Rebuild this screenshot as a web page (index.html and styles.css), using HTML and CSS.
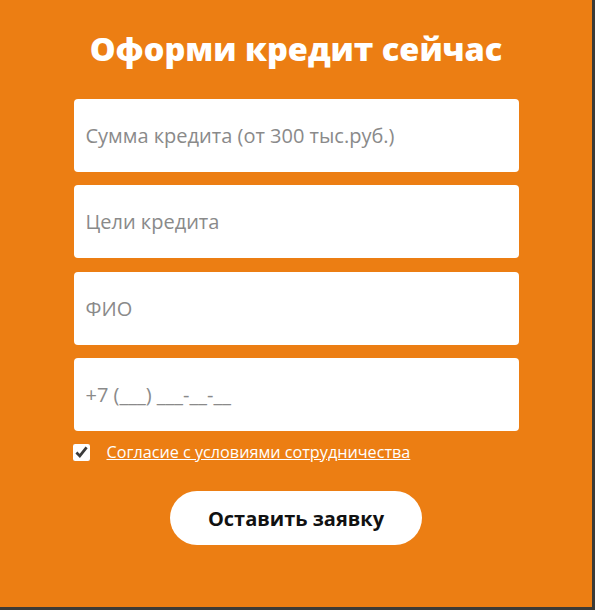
FILE: index.html
```html
<!DOCTYPE html>
<html lang="ru">
<head>
<meta charset="utf-8">
<link rel="stylesheet" href="styles.css">
</head>
<body>
<div class="frame">
  <form class="panel">
    <h1 class="title">Оформи кредит сейчас</h1>
    <div class="fields">
      <input class="field" type="text" placeholder="Сумма кредита (от 300 тыс.руб.)">
      <input class="field" type="text" placeholder="Цели кредита">
      <input class="field" type="text" placeholder="ФИО">
      <input class="field" type="text" placeholder="+7 (___) ___-__-__">
    </div>
    <label class="agree">
      <input class="check" type="checkbox" checked>
      <a class="agree-link" href="#">Согласие с условиями сотрудничества</a>
    </label>
    <button class="submit" type="button">Оставить заявку</button>
  </form>
</div>
</body>
</html>
```

FILE: styles.css
```css
html, body {
  margin: 0;
  padding: 0;
}
body {
  width: 595px;
  height: 610px;
  background: #3c3a36;
  font-family: "Open Sans", sans-serif;
  overflow: hidden;
}
.frame {
  width: 592px;
  height: 607px;
  background: #ec7e13;
}
.panel {
  display: flex;
  flex-direction: column;
  align-items: center;
  padding-top: 27px;
  margin: 0;
}
.title {
  margin: 0;
  font-size: 32.5px;
  font-weight: 800;
  line-height: 44px;
  color: #fff;
}
.fields {
  display: flex;
  flex-direction: column;
  gap: 13.4px;
  margin-top: 28px;
  width: 445px;
}
.field {
  box-sizing: border-box;
  width: 445px;
  height: 73px;
  border: 0;
  border-radius: 4px;
  background: #fff;
  padding: 0 12px;
  font-family: "Open Sans", sans-serif;
  font-size: 20px;
  color: #333;
  outline: none;
}
.field::placeholder {
  color: #8a8a8a;
}
.agree {
  display: flex;
  align-items: center;
  gap: 17px;
  width: 445px;
  margin-top: 10px;
}
.check {
  margin: 0 0 0 -1px;
  width: 17px;
  height: 17px;
  accent-color: #ffffff;
}
.agree-link {
  color: #fff;
  font-size: 16.2px;
  line-height: 22px;
  text-decoration: underline;
}
.submit {
  margin-top: 28px;
  width: 252px;
  height: 54px;
  border: 0;
  border-radius: 27px;
  background: #fff;
  color: #111;
  font-family: "Open Sans", sans-serif;
  font-size: 20px;
  font-weight: 700;
}
```
